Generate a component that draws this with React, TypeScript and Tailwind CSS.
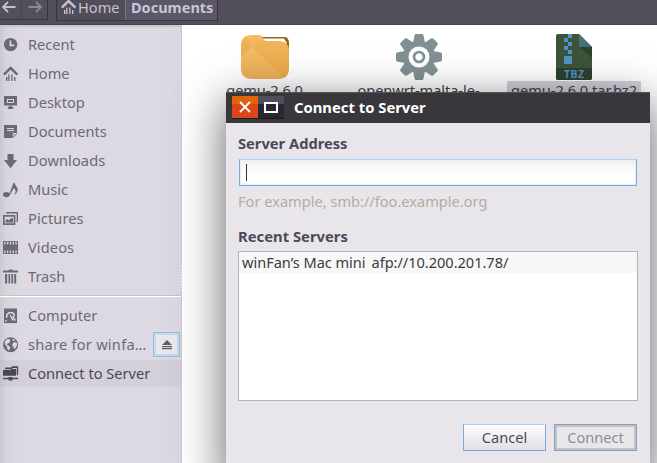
import type { ReactNode } from "react";

function Icon({ children, className = "" }: { children: ReactNode; className?: string }) {
  return (
    <svg viewBox="0 0 16 16" className={`h-4 w-4 shrink-0 ${className}`} fill="currentColor">
      {children}
    </svg>
  );
}

const HomeShape = () => (
  <>
    <path d="M.8 8.6 7.6 2l6.8 6.6" fill="none" stroke="currentColor" strokeWidth="2.5" />
    <path d="M3 11h1.4v4H3zM5.2 8.5h1.3V15H5.2zM8.2 8.5h1.3V15H8.2zM11 11h1.4v4H11z" />
  </>
);

const icons = {
  recent: (
    <>
      <circle cx="7.6" cy="7.6" r="6.7" />
      <path d="M7.4 3.6v4.7h3.8" fill="none" stroke="#dcd9e3" strokeWidth="1.7" />
    </>
  ),
  home: <HomeShape />,
  desktop: (
    <>
      <path fillRule="evenodd" d="M1 1h13v9.5H1zM4 4v4h7V4z" />
      <path d="M5 5h5v2H5zM6 11h3v1h1.3v2H4.8v-2H6z" />
    </>
  ),
  documents: (
    <>
      <path d="M1 1h13v7H9v6H1z" />
      <path d="M4 4.5h7M4 6.5h7" stroke="#dcd9e3" strokeWidth="1" />
      <path d="M9.8 8.5h3.7v1.2l-3.7 4z" fill="none" stroke="currentColor" strokeWidth="1" />
    </>
  ),
  downloads: <path d="M4.5 1h6v6h3.6L7.5 15.3 1 7h3.5z" />,
  music: (
    <>
      <ellipse cx="3.4" cy="12.6" rx="3.4" ry="2.7" />
      <path d="M5.9 13 10.5.8h1.1c.4 3.2 3.3 4.1 3.1 7.1-.1 2.1-1.7 4-3.5 4.6 1.8-2.6 2.2-5-.7-6.3L7 13z" />
    </>
  ),
  pictures: (
    <>
      <path d="M3 1h12v10h-1.4V2.6H3z" />
      <path fillRule="evenodd" d="M0 4h12.4v10H0zm1.7 1.7v6.6h9V5.7z" />
      <path d="M2.5 11.6v-2l1.8-1.5 1.6 1.3 2-2.5 1 .8 1.1-1v4.9z" />
    </>
  ),
  videos: (
    <path
      fillRule="evenodd"
      d="M0 1h15v13H0zM1.2 1.8v2.6h1.3V1.8zm2.8 0v2.6h1.3V1.8zm2.8 0v2.6h1.3V1.8zm2.8 0v2.6h1.3V1.8zm2.8 0v2.6h1.3V1.8zM1.2 10.6v2.6h1.3v-2.6zm2.8 0v2.6h1.3v-2.6zm2.8 0v2.6h1.3v-2.6zm2.8 0v2.6h1.3v-2.6zm2.8 0v2.6h1.3v-2.6z"
    />
  ),
  trash: <path d="M0 1.5h5.2L6.3.5h2.6L10 1.5h5v2H0zM2 5h2.2v9.5H2zM5.5 5h1.7v9.5H5.5zM8.4 5h1.7v9.5H8.4zM11.2 5h2v9.5h-2z" />,
  computer: (
    <>
      <path d="M1 .5h13v14.6H1z" />
      <path d="M3.9 9.8A3.9 3.9 0 1 1 11.3 7c-.2 1.4-1 2-1.5 2.4l2.6 3.2" fill="none" stroke="#dcd9e3" strokeWidth="1.6" />
      <path d="m7 6.8 2.8 5.7" stroke="#dcd9e3" strokeWidth="1.2" />
      <path d="M2.2 12h1.5v1.5H2.2z" fill="#dcd9e3" />
    </>
  ),
  share: (
    <>
      <circle cx="7.6" cy="7.7" r="7.5" />
      <path d="m2 4.3 2.4-2.4 2.2.3.8 1.9-1.3 1.8-1.7.5-.6 1.3 1.9 1 1.6 1.8-.7 1.7-.5 1.5-1.8-1.9-.5-2.6-1.9-2zM9 2l1.7-.1 1.3 1.5-1.4.8zM9.8 6.3l2.1-1.2 2 .9.1 2.6-1.8 3-1.3.5-.5-2.7-1.4-1z" fill="#dcd9e3" />
    </>
  ),
  connect: (
    <>
      <path d="M2 3.2V1.4h6L9.5.3h5.7V9h-1.3V1.9H10L8.5 3.2z" />
      <path d="M0 4h7.6L9 2.9h4.2v6.9H0z" />
      <path d="M0 11.8h5.5v-.7h4v.7H15v1.4H9.5v1.3h-4v-1.3H0z" />
    </>
  ),
};

type IconName = keyof typeof icons;

function Place({ icon, label, tracking = "", active = false, children }: {
  icon: IconName; label: string; tracking?: string; active?: boolean; children?: ReactNode;
}) {
  return (
    <div className="flex h-[29px] w-full items-center">
      <div className={`flex h-[27px] w-full items-center pl-[3px] ${active ? "bg-[rgba(75,70,90,0.06)] text-[#4b4755]" : "text-[#6c6974]"}`}>
        <Icon>{icons[icon]}</Icon>
        <span className={`ml-[9px] whitespace-nowrap ${tracking}`}>{label}</span>
        {children}
      </div>
    </div>
  );
}

function Sidebar() {
  return (
    <aside className="relative flex w-[182px] shrink-0 flex-col border-t-2 border-r border-t-[#c9c6cf] border-r-[#cbc8d0] bg-[linear-gradient(90deg,#cbc9cf_0,#d7d4dd_6px,#dcd9e3_22px,#dcd9e3_165px,#d9d6df_100%)] pt-[3px]">
      <Place icon="recent" label="Recent" />
      <Place icon="home" label="Home" />
      <Place icon="desktop" label="Desktop" />
      <Place icon="documents" label="Documents" />
      <Place icon="downloads" label="Downloads" tracking="tracking-[0.1px]" />
      <Place icon="music" label="Music" />
      <Place icon="pictures" label="Pictures" tracking="tracking-[0.1px]" />
      <Place icon="videos" label="Videos" tracking="tracking-[0.1px]" />
      <Place icon="trash" label="Trash" />
      <div className="mt-[4px] mb-[4px] h-[2px] border-t border-[#c6c3cb] bg-white" />
      <Place icon="computer" label="Computer" />
      <Place icon="share" label="share for winfa…" tracking="tracking-[0.25px]">
        <button className="mr-px ml-auto flex h-[25px] w-[27px] shrink-0 items-center justify-center border border-[#91bce0] bg-[#e9e7ee] shadow-[inset_0_0_0_2px_#c7d8e8]">
          <svg viewBox="0 0 10 10" className="h-[10px] w-[10px]" fill="#625e69">
            <path d="M5 0 10 5H0zM0 6h10v1.2H0zM0 8h10v1.2H0z" />
          </svg>
        </button>
      </Place>
      <Place icon="connect" label="Connect to Server" active />
      <div className="absolute top-[239px] -right-px h-[26px] w-px bg-[repeating-linear-gradient(#fff_0_1px,#cbc8d0_1px_3px)]" />
    </aside>
  );
}

function Toolbar() {
  return (
    <header className="flex h-[25px] shrink-0 items-start border-b border-[#464250] bg-[#524e5a] text-[#c6c2d0]">
      <div className="flex h-[20px] w-[48px] border-r border-b border-[#37343d] bg-[#53505b]">
        <div className="flex w-[22px] items-center border-r border-[#46434d] pb-[6px] pl-[2px]">
          <svg viewBox="0 0 14 12" className="h-3 w-[14px]" fill="none" stroke="#c5c1cf" strokeWidth="1.8"><path d="M13.5 6H1.5M6 1 1 6l5 5" /></svg>
        </div>
        <div className="flex items-center pb-[6px] pl-[6px]">
          <svg viewBox="0 0 14 12" className="h-3 w-[14px]" fill="none" stroke="#8c8896" strokeWidth="1.8"><path d="M.5 6h12M8 1l5 5-5 5" /></svg>
        </div>
      </div>
      <div className="ml-[8px] flex h-[21px] border-x border-b border-[#37343d] leading-[14px]">
        <div className="flex w-[69px] items-center border-r border-[#77738a] bg-[#514e59] pb-[6px] pl-[4px]">
          <Icon>
            <HomeShape />
          </Icon>
          <span className="ml-[1px]">Home</span>
        </div>
        <div className="flex w-[91px] items-center bg-[#5b5768] pb-[7px] pl-[5px] text-[14.5px] font-bold text-[#c9c5d4]">Documents</div>
      </div>
    </header>
  );
}

function Files() {
  return (
    <main className="flex flex-1 items-start bg-white text-[#44414a]">
      <div className="ml-[25px] flex w-[115px] flex-col items-center pt-[9px]">
        <svg viewBox="0 0 48 46" className="h-[46px] w-[48px]">
          <defs>
            <linearGradient id="folder" x1="0" y1="0" x2="0" y2="1"><stop stopColor="#f6bd65" /><stop offset="1" stopColor="#e9aa4c" /></linearGradient>
          </defs>
          <path d="M20 3h24q3 0 4 5v10H20z" fill="#9b6412" />
          <path d="M21 4.5h22l2.5 4V16H21z" fill="#fff" />
          <path d="M0 12Q0 1 11 1h6q4 0 5 3 .8 3 4 3h12q10 0 10 10v17q0 11-11 11H11Q0 45 0 34z" fill="url(#folder)" />
          <path d="M0 22 11 13l32 30q-2 2-6 2H11Q0 45 0 34z" fill="#fff" opacity=".06" />
          <path d="M0 22V12Q0 4 5 2l6 11z" fill="#d88e2c" opacity=".15" />
          <path d="m11 13 11-9q.8 3 4 3h12q10 0 10 10v17q0 6-5 9z" fill="#d88e2c" opacity=".1" />
        </svg>
        <span className="mt-px leading-[18px] tracking-[-0.1px] whitespace-nowrap">qemu-2.6.0</span>
      </div>
      <div className="ml-[39px] flex w-[115px] flex-col items-center pt-[9px]">
        <svg viewBox="-23 -23 46 46" className="h-[46px] w-[46px]" fill="#819094">
          {[0, 45, 90, 135].map((angle) => (
            <path key={angle} d="M-4.4-22Q-4-23-3-23h6q1 0 1.4 1L6-14V14L4.4 22Q4 23 3 23h-6q-1 0-1.4-1L-6 14v-28z" transform={`rotate(${angle})`} />
          ))}
          <circle r="16" />
          <circle r="10.5" fill="#fff" />
          <circle r="5" fill="none" stroke="#819094" strokeWidth="2.6" />
        </svg>
        <span className="mt-px leading-[18px] tracking-[-0.05px] whitespace-nowrap">openwrt-malta-le-</span>
      </div>
      <div className="ml-[31px] flex w-[134px] flex-col items-center pt-[9px]">
        <svg viewBox="0 0 36 46" className="h-[46px] w-[36px]">
          <path d="M2 0h21l13 13v31q0 2-2 2H2q-2 0-2-2V2q0-2 2-2z" fill="#3d5439" />
          <path d="M23 13h13v11z" fill="#304332" />
          <path d="m23 0 13 13H23z" fill="#48727a" />
          <path d="M0 34h36v10q0 2-2 2H2q-2 0-2-2z" fill="#2e402f" />
          <path d="M12 0h4v4h-4zM8 4h4v4H8zM12 8h4v4h-4zM8 12h4v4H8zM12 16h4v4h-4zM8 22h8v8H8z" fill="#5292c7" />
          <text x="18" y="44" textAnchor="middle" textLength="20" fontSize="10.5" fontWeight="700" fill="#4d91c5">TBZ</text>
        </svg>
        <span className="mt-px w-full bg-[#d3d0da] text-center leading-[18px] tracking-[-0.03px] whitespace-nowrap">qemu-2.6.0.tar.bz2</span>
      </div>
    </main>
  );
}

function ConnectDialog() {
  return (
    <section className="absolute top-[92px] left-[226px] flex h-[385px] w-[424px] flex-col bg-[#e8e5eb] text-[#4c4956] shadow-[0_12px_42px_2px_rgba(0,0,0,0.58)]">
      <div className="flex h-[31px] shrink-0 items-start border-t border-[#55525e] bg-[#39373b] pt-[3px] pl-[6px]">
        <button className="flex h-[23px] w-[26px] items-center justify-center border-b border-[#1c1b20] bg-[linear-gradient(#e0650d_0_35%,#dc4719_35%)]">
          <svg viewBox="0 0 12 12" className="h-3 w-3" stroke="#fff" strokeWidth="1.9"><path d="m1 1 10 10M11 1 1 11" /></svg>
        </button>
        <button className="flex h-[23px] w-[26px] items-center justify-center border-b border-[#1c1b20] bg-[linear-gradient(#504c59_0_35%,#29272f_35%)]">
          <span className="h-[11px] w-[14px] border-2 border-white" />
        </button>
        <h1 className="ml-[10px] text-[14.8px] leading-[23px] font-bold whitespace-nowrap text-white">Connect to Server</h1>
      </div>
      <div className="flex flex-col px-[12px] pt-[10px]">
        <label className="h-[20px] text-[14.7px] leading-[20px] font-bold">Server Address</label>
        <div className="mx-px mt-[6px] flex h-[27px] items-center border border-[#79aadd] border-t-[#a9d3fb] bg-[linear-gradient(#f1f1f2,#fff_60%)] pl-[6px] shadow-[inset_0_0_0_1px_#e3f0fc]">
          <span className="h-[17px] w-px bg-[#333]" />
        </div>
        <p className="mt-[5px] h-[20px] leading-[20px] whitespace-nowrap text-[#b5aca2]">For example, smb://foo.example.org</p>
        <h2 className="mt-[15px] h-[20px] text-[14.8px] leading-[20px] font-bold">Recent Servers</h2>
        <div className="mt-[5px] h-[150px] border border-[#b4b1c0] bg-white">
          <div className="flex h-[21px] items-center bg-[#f7f7f7] pl-[3px] tracking-[-0.04px] whitespace-nowrap text-[#3d3b41]">
            <span>winFan’s Mac mini</span>
            <span className="ml-[6px]">afp://10.200.201.78/</span>
          </div>
        </div>
        <div className="mt-[23px] mr-px flex justify-end gap-[8px]">
          <button className="h-[27px] w-[83px] border border-[#79aadd] border-t-[#a9d3fb] bg-[linear-gradient(#fdfdfe,#e2dfe7)] leading-[25px]">Cancel</button>
          <button className="h-[27px] w-[83px] border border-[#929cae] bg-[#e7e7e9] leading-[25px] text-[#8f8a9c] shadow-[inset_0_0_0_2px_#b9c4d0]">Connect</button>
        </div>
      </div>
    </section>
  );
}

export default function App() {
  return (
    <div className="relative flex h-[463px] w-[657px] flex-col overflow-hidden bg-white font-['Noto_Sans','Open_Sans',sans-serif] text-[14.6px]">
      <Toolbar />
      <div className="flex min-h-0 flex-1">
        <Sidebar />
        <div className="flex flex-1 overflow-hidden"><Files /></div>
      </div>
      <ConnectDialog />
    </div>
  );
}
